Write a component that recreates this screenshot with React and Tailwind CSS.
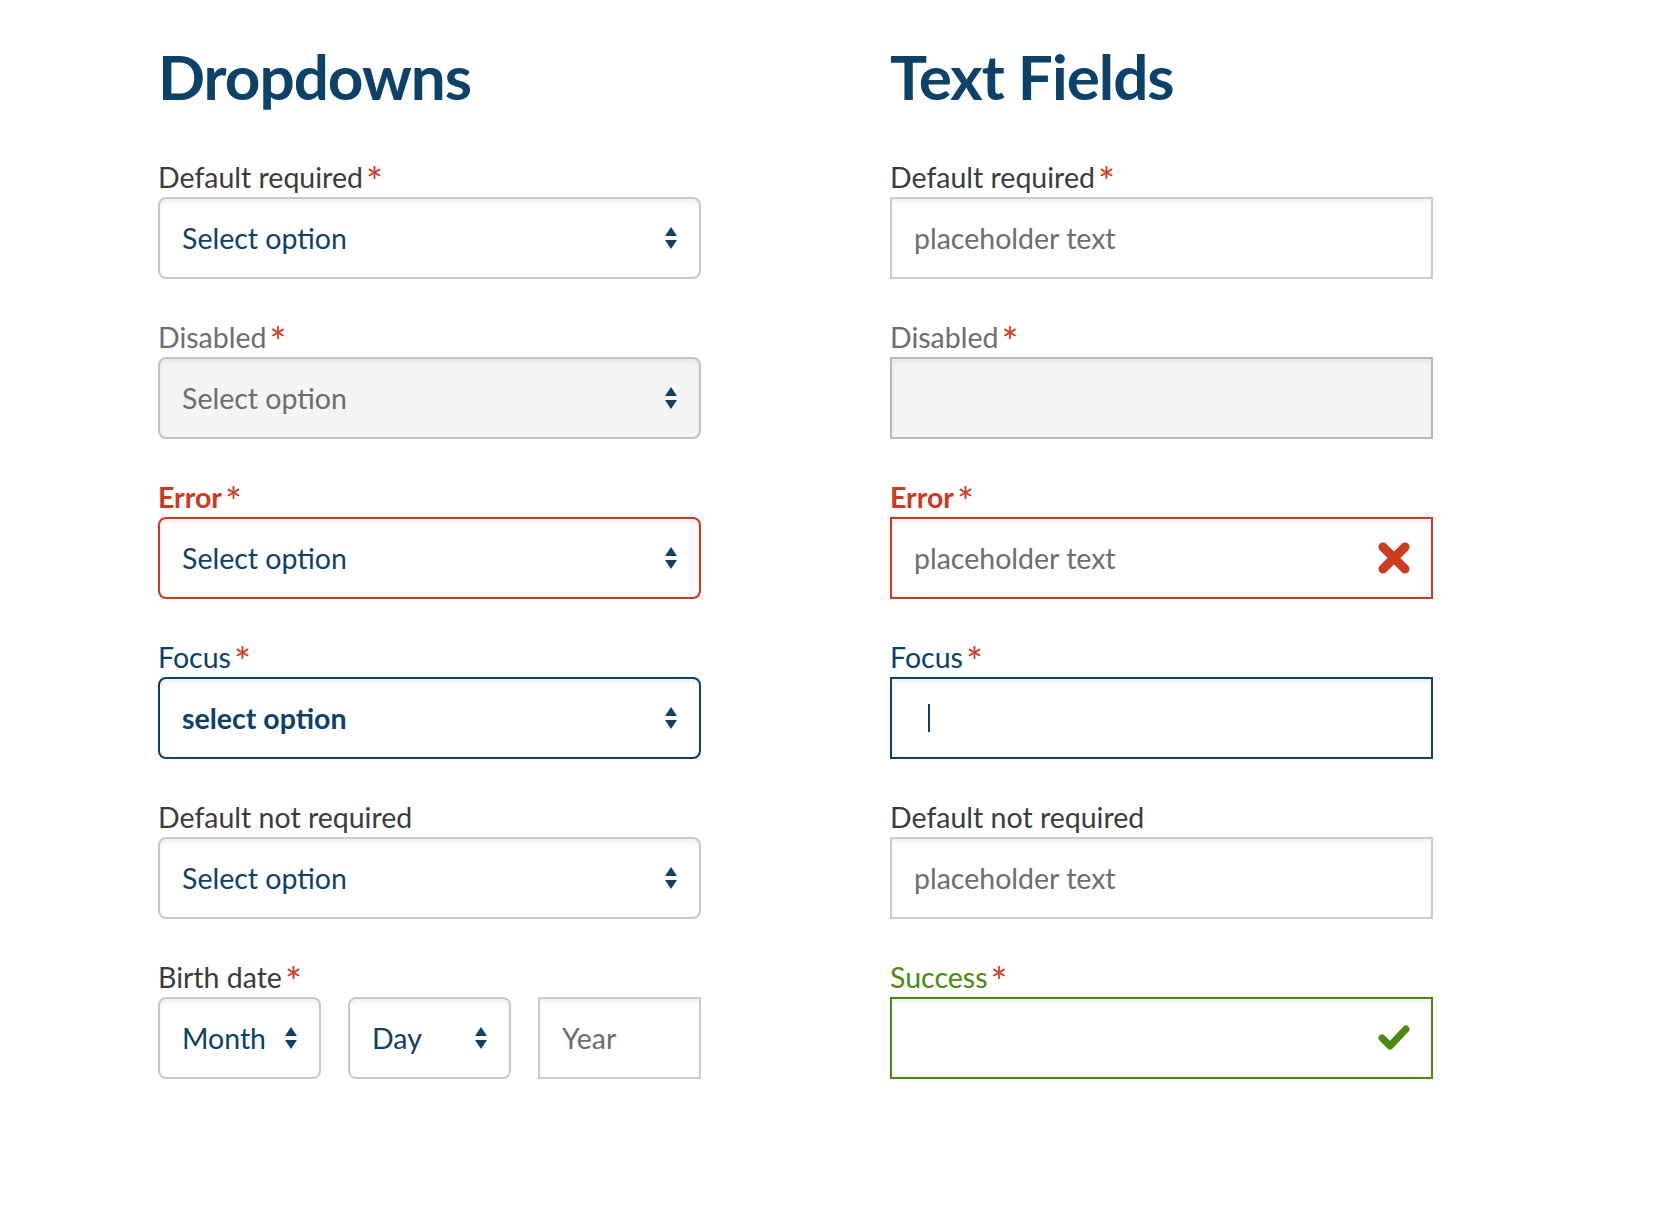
import React from 'react';

const NAVY = 'text-[#0c4168]';

// up/down arrows shown at the right of each dropdown
const Arrows = () => (
  <svg width="12" height="22" viewBox="0 0 12 22" className="shrink-0">
    <path d="M6 0 L12 9 L0 9 Z" fill="#0c4168" />
    <path d="M0 13 L12 13 L6 22 Z" fill="#0c4168" />
  </svg>
);

const ErrorIcon = () => (
  <svg width="34" height="34" viewBox="0 0 34 34">
    <path d="M6 6 L28 28 M28 6 L6 28" stroke="#cc3b1f" strokeWidth="9" strokeLinecap="round" />
  </svg>
);

const CheckIcon = () => (
  <svg width="34" height="28" viewBox="0 0 34 28">
    <path d="M5 14 L13 22 L29 5" stroke="#4a8a0c" strokeWidth="7" strokeLinecap="round" strokeLinejoin="round" fill="none" />
  </svg>
);

const Label = ({ children, tone = 'default', required = true }) => {
  const tones = {
    default: 'text-[#3b3b3d]',
    disabled: 'text-[#6d6d6f]',
    error: 'text-[#cc3b1f] font-bold',
    focus: 'text-[#0c4168]',
    success: 'text-[#4a8a0c]',
  };
  return (
    <div className={`h-[38px] leading-[36px] text-[28.5px] ${tones[tone]}`}>
      {children}
      {required && (
        <span className="text-[#cc3b1f] font-normal text-[40px] leading-[0] ml-[3px] relative top-[9px]">*</span>
      )}
    </div>
  );
};

const Dropdown = ({ text = 'Select option', state = 'default', className = 'w-full' }) => {
  const styles = {
    default: 'border-[#c9c9c9] bg-white',
    disabled: 'border-[#c2c2c2] bg-[#f4f4f4]',
    error: 'border-[#cc3b1f] bg-white',
    focus: 'border-[#0c4168] bg-white',
  };
  const textColor = state === 'disabled' ? 'text-[#6d6d6f]' : NAVY;
  return (
    <div
      className={`${className} h-[82px] flex items-center justify-between pl-[22px] pr-[22px] border-2 rounded-[8px] shadow-[inset_0_3px_4px_rgba(0,0,0,0.06)] ${styles[state]}`}
    >
      <span className={`text-[28.5px] ${textColor} ${state === 'focus' ? 'font-bold' : ''}`}>{text}</span>
      <Arrows />
    </div>
  );
};

const TextField = ({ placeholder, state = 'default', className = 'w-full' }) => {
  const styles = {
    default: 'border-[#cccccc] bg-white',
    disabled: 'border-[#b9b9b9] bg-[#f4f4f4]',
    error: 'border-[#cc3b1f] bg-white',
    focus: 'border-[#0c4168] bg-white',
    success: 'border-[#4a8a0c] bg-white',
  };
  return (
    <div
      className={`${className} h-[82px] flex items-center justify-between pl-[22px] pr-[20px] border-2 shadow-[inset_0_3px_4px_rgba(0,0,0,0.06)] ${styles[state]}`}
    >
      {placeholder ? (
        <span className="text-[28.5px] text-[#6d6d6f]">{placeholder}</span>
      ) : state === 'focus' ? (
        <span className="ml-[14px] w-[2px] h-[28px] bg-[#0c4168]" />
      ) : (
        <span />
      )}
      {state === 'error' && <ErrorIcon />}
      {state === 'success' && <CheckIcon />}
    </div>
  );
};

const Field = ({ children }) => <div className="mb-[40px]">{children}</div>;

export default function App() {
  return (
    <div className="min-h-screen bg-white font-['Lato',sans-serif] pl-[158px] pt-[45px]">
      <div className="flex gap-[189px]">
        {/* Dropdowns column */}
        <div className="w-[543px]">
          <h1 className={`text-[62px] leading-[62px] font-bold tracking-[-1px] ${NAVY} mb-[52px]`}>Dropdowns</h1>

          <Field>
            <Label>Default required</Label>
            <Dropdown />
          </Field>
          <Field>
            <Label tone="disabled">Disabled</Label>
            <Dropdown state="disabled" />
          </Field>
          <Field>
            <Label tone="error">Error</Label>
            <Dropdown state="error" />
          </Field>
          <Field>
            <Label tone="focus">Focus</Label>
            <Dropdown state="focus" text="select option" />
          </Field>
          <Field>
            <Label required={false}>Default not required</Label>
            <Dropdown />
          </Field>
          <Field>
            <Label>Birth date</Label>
            <div className="grid grid-cols-3 gap-[27px]">
              <Dropdown text="Month" />
              <Dropdown text="Day" />
              <TextField placeholder="Year" />
            </div>
          </Field>
        </div>

        {/* Text fields column */}
        <div className="w-[543px]">
          <h1 className={`text-[62px] leading-[62px] font-bold tracking-[-1px] ${NAVY} mb-[52px]`}>Text Fields</h1>

          <Field>
            <Label>Default required</Label>
            <TextField placeholder="placeholder text" />
          </Field>
          <Field>
            <Label tone="disabled">Disabled</Label>
            <TextField state="disabled" />
          </Field>
          <Field>
            <Label tone="error">Error</Label>
            <TextField state="error" placeholder="placeholder text" />
          </Field>
          <Field>
            <Label tone="focus">Focus</Label>
            <TextField state="focus" />
          </Field>
          <Field>
            <Label required={false}>Default not required</Label>
            <TextField placeholder="placeholder text" />
          </Field>
          <Field>
            <Label tone="success">Success</Label>
            <TextField state="success" />
          </Field>
        </div>
      </div>
    </div>
  );
}
